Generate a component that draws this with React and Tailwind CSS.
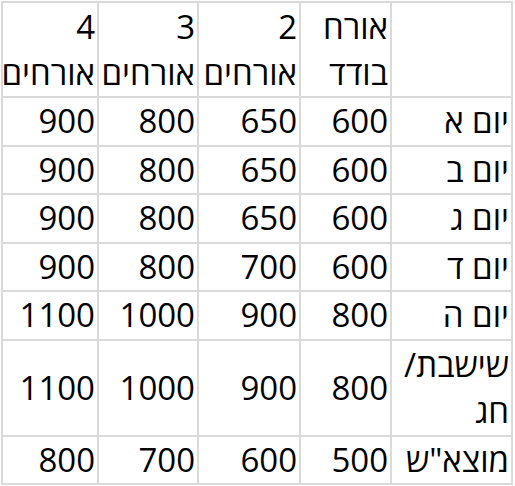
import React from 'react';

const rows = [
  ['יום א', '600', '650', '800', '900'],
  ['יום ב', '600', '650', '800', '900'],
  ['יום ג', '600', '650', '800', '900'],
  ['יום ד', '600', '700', '800', '900'],
  ['יום ה', '800', '900', '1000', '1100'],
  ['שישבת/ חג', '800', '900', '1000', '1100'],
  ['מוצא"ש', '500', '600', '700', '800'],
];

const cell = 'border-2 border-[#dadada] px-[2px] py-0 text-right align-middle font-normal whitespace-normal';

export default function App() {
  return (
    <div className="bg-white min-h-screen pt-px pl-px">
      <table
        dir="rtl"
        className="table-fixed border-collapse w-[510px] text-[33px] leading-[46px] text-black"
        style={{ fontFamily: '"Open Sans", "Noto Sans", sans-serif' }}
      >
        <colgroup>
          <col className="w-[121px]" />
          <col className="w-[91px]" />
          <col className="w-[102px]" />
          <col className="w-[100px]" />
          <col className="w-[96px]" />
        </colgroup>
        <thead>
          <tr className="h-[95px]">
            <th className={cell}></th>
            <th className={cell}>אורח בודד</th>
            <th className={cell}>2 אורחים</th>
            <th className={cell}>3 אורחים</th>
            <th className={cell}>4 אורחים</th>
          </tr>
        </thead>
        <tbody>
          {rows.map((r, i) => (
            <tr key={i} className={i === 5 ? 'h-[96px]' : 'h-[48.5px]'}>
              {r.map((v, j) => (
                <td key={j} className={cell}>{v}</td>
              ))}
            </tr>
          ))}
        </tbody>
      </table>
    </div>
  );
}
